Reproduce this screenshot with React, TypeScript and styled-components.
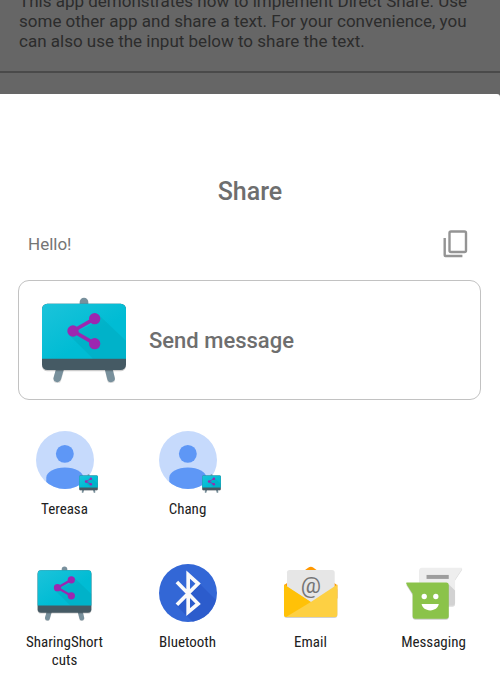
import React, { useId } from "react";
import styled, { createGlobalStyle } from "styled-components";

const GlobalStyle = createGlobalStyle`
  *, *::before, *::after { box-sizing: border-box; }
  body {
    margin: 0;
    background: #666;
    font-family: Roboto, "Liberation Sans", sans-serif;
  }
  button {
    margin: 0;
    padding: 0;
    border: 0;
    background: none;
    color: inherit;
    font: inherit;
    cursor: pointer;
  }
  svg { display: block; }
`;

const Screen = styled.div`
  display: flex;
  flex-direction: column;
  min-height: 100vh;
`;

const Backdrop = styled.header`
  display: flex;
  flex-direction: column;
  justify-content: flex-end;
  height: 94px;
  overflow: hidden;
  background: #666;
`;

const Intro = styled.p`
  flex: none;
  margin: 0;
  padding: 0 19px 20px;
  color: #2c2c2c;
  font-size: 17px;
  line-height: 20px;
`;

const Divider = styled.hr`
  flex: none;
  width: 100%;
  height: 2px;
  margin: 0 0 21px;
  border: 0;
  background: #4a4a4a;
`;

const Sheet = styled.main`
  flex: 1;
  display: flex;
  flex-direction: column;
  padding: 83px 0 24px;
  border-radius: 0 3px 0 0;
  background: #fff;
`;

const Title = styled.h1`
  margin: 0;
  color: #6e6e6e;
  font-size: 25px;
  font-weight: 500;
  line-height: 30px;
  text-align: center;
`;

const Preview = styled.div`
  display: flex;
  align-items: center;
  justify-content: space-between;
  height: 30px;
  margin: 22px 32px 21px 28px;
  color: #757575;
  font-size: 17px;
`;

const FeaturedTarget = styled.button`
  display: flex;
  align-items: center;
  gap: 22px;
  height: 120px;
  margin: 0 19px 0 18px;
  padding: 0 22px;
  border: 1px solid #c2c2c2;
  border-radius: 11px;
  color: #6e6e6e;
  font-size: 22px;
  font-weight: 500;
  text-align: left;
`;

const TargetGrid = styled.div<{ $gap: number }>`
  display: grid;
  grid-template-columns: repeat(4, 1fr);
  align-items: start;
  margin-top: ${(p) => p.$gap}px;
  padding: 0 5px 0 3px;
`;

const Target = styled.button`
  display: flex;
  flex-direction: column;
  align-items: center;
  gap: 11px;
  color: #212121;
  font-family: "Roboto Condensed", Roboto, "Liberation Sans", sans-serif;
  font-size: 15px;
  line-height: 18px;
`;

const TargetLabel = styled.span`
  max-width: 80px;
  overflow-wrap: anywhere;
`;

const IconFrame = styled.span`
  position: relative;
  display: flex;
  align-items: center;
  justify-content: center;
  width: 58px;
  height: 58px;
`;

const Badge = styled.span`
  position: absolute;
  right: -4px;
  bottom: -4px;
`;

function BoardIcon({ size }: { size: number }) {
  const id = useId();
  return (
    <svg width={size} height={size} viewBox="0 0 256 258" aria-hidden="true">
      <defs>
        <linearGradient id={id} x1="0" y1="0" x2="1" y2="1">
          <stop offset="0" stopColor="#1cc3da" />
          <stop offset="0.6" stopColor="#00bcd4" />
        </linearGradient>
      </defs>
      <g stroke="#000" strokeOpacity="0.12" strokeLinecap="round" strokeWidth="24">
        <path d="M56 219 48 247M203 219 209 247" />
      </g>
      <g stroke="#78909c" strokeLinecap="round" strokeWidth="23">
        <path d="M57 212 48 244M201 212 209 244" />
      </g>
      <path d="M115 24V15a13 13 0 0 1 26 0v9z" fill="#78909c" />
      <rect x="2" y="23" width="252" height="200" rx="16" fill="#000" opacity="0.2" />
      <rect x="2" y="20" width="252" height="199" rx="16" fill="#455a64" />
      <path d="M2 185V36a16 16 0 0 1 16-16h220a16 16 0 0 1 16 16v149z" fill={`url(#${id})`} />
      <path d="M172 53 254 131v54H155L83 114l77-36z" fill="#00838f" opacity="0.16" />
      <path d="M160 65 95 102 160 140" fill="none" stroke="#9c27b0" strokeWidth="11" />
      <circle cx="95" cy="102" r="17" fill="#9c27b0" />
      <circle cx="160" cy="65" r="17" fill="#9c27b0" />
      <circle cx="160" cy="140" r="17" fill="#9c27b0" />
    </svg>
  );
}

function AvatarIcon() {
  const id = useId();
  return (
    <svg width="58" height="58" viewBox="0 0 175 175" aria-hidden="true">
      <clipPath id={id}>
        <circle cx="87.5" cy="87.5" r="87.5" />
      </clipPath>
      <g clipPath={`url(#${id})`}>
        <rect width="175" height="175" fill="#c6dafc" />
        <circle cx="87" cy="69" r="27" fill="#5e97f6" />
        <path d="M31 175v-34C31 123 56 110 87 110s56 13 56 31v34z" fill="#5e97f6" />
      </g>
    </svg>
  );
}

function BluetoothIcon() {
  const id = useId();
  return (
    <svg width="58" height="58" viewBox="0 0 175 175" aria-hidden="true">
      <clipPath id={id}>
        <circle cx="87.5" cy="87.5" r="87.5" />
      </clipPath>
      <circle cx="87.5" cy="87.5" r="87.5" fill="#3367d6" />
      <path d="M122 59 175 112v63H102L51 124 86 88z" fill="#2a56c6" opacity="0.65" clipPath={`url(#${id})`} />
      <path d="M54 54 118 120 88 145V32L118 59 54 123" fill="none" stroke="#fafafa" strokeWidth="11" />
    </svg>
  );
}

function EmailIcon() {
  return (
    <svg width="58" height="58" viewBox="0 0 175 175" aria-hidden="true">
      <path d="M6 64 79 11q8-5 16 0l72 53v40H6z" fill="#ff9800" />
      <rect x="6" y="70" width="161" height="93" rx="9" fill="#000" opacity="0.18" />
      <path d="M15 120V26q0-8 8-8h128q8 0 8 8v94z" fill="#e6e6e6" />
      <text x="87" y="88" textAnchor="middle" fontFamily="Roboto, sans-serif" fontSize="68" fill="#757575">
        @
      </text>
      <path d="M6 62 87 115 167 62V152q0 8-8 8H14q-8 0-8-8z" fill="#fdd043" />
      <path d="M6 62 87 115 12 160q-6-2-6-8z" fill="#ffc107" />
    </svg>
  );
}

function MessagingIcon() {
  return (
    <svg width="58" height="58" viewBox="0 0 175 175" aria-hidden="true">
      <path d="M43 22q0-8 8-8h119q4 0 2 4L151 50v71q0 8-8 8H51q-8 0-8-8z" fill="#000" opacity="0.14" />
      <path d="M43 19q0-8 8-8h119q4 0 2 4L151 47v71q0 8-8 8H51q-8 0-8-8z" fill="#eee" />
      <path d="M131 60 151 80v38q0 8-8 8h-12z" fill="#d2d2d2" />
      <rect x="65" y="33" width="67" height="12" fill="#9e9e9e" />
      <path d="M4 63 23 94v67q0 7 8 7h93q8 0 8-7V63z" fill="#000" opacity="0.2" />
      <path d="M6 56h118q8 0 8 8v93q0 8-8 8H31q-8 0-8-8V90L4 60q-2-4 2-4z" fill="#8bc34a" />
      <circle cx="58" cy="98" r="8" fill="#fff" />
      <circle cx="93" cy="98" r="8" fill="#fff" />
      <path d="M50 121h52c-3 12-12 19-26 19s-23-7-26-19z" fill="#fff" />
    </svg>
  );
}

function CopyIcon() {
  return (
    <svg width="25" height="28" viewBox="0 0 25 28" fill="none" stroke="#949494" strokeWidth="2.4" aria-hidden="true">
      <rect x="6.5" y="1.5" width="16.5" height="20.5" rx="1.5" />
      <path d="M1.7 8v17.3q0 .7.7.7h17" />
    </svg>
  );
}

const contacts = ["Tereasa", "Chang"];

const apps = [
  { name: "SharingShortcuts", icon: <BoardIcon size={55} /> },
  { name: "Bluetooth", icon: <BluetoothIcon /> },
  { name: "Email", icon: <EmailIcon /> },
  { name: "Messaging", icon: <MessagingIcon /> },
];

export default function App() {
  return (
    <>
      <GlobalStyle />
      <Screen>
        <Backdrop>
          <Intro>
            This app demonstrates how to implement Direct Share. Use some other app and share a text. For your
            convenience, you can also use the input below to share the text.
          </Intro>
          <Divider />
        </Backdrop>
        <Sheet>
          <Title>Share</Title>
          <Preview>
            <span>Hello!</span>
            <button type="button" aria-label="Copy">
              <CopyIcon />
            </button>
          </Preview>
          <FeaturedTarget type="button">
            <BoardIcon size={86} />
            <span>Send message</span>
          </FeaturedTarget>
          <TargetGrid $gap={31}>
            {contacts.map((name) => (
              <Target type="button" key={name}>
                <IconFrame>
                  <AvatarIcon />
                  <Badge>
                    <BoardIcon size={19} />
                  </Badge>
                </IconFrame>
                <TargetLabel>{name}</TargetLabel>
              </Target>
            ))}
          </TargetGrid>
          <TargetGrid $gap={46}>
            {apps.map((app) => (
              <Target type="button" key={app.name}>
                <IconFrame>{app.icon}</IconFrame>
                <TargetLabel>{app.name}</TargetLabel>
              </Target>
            ))}
          </TargetGrid>
        </Sheet>
      </Screen>
    </>
  );
}
